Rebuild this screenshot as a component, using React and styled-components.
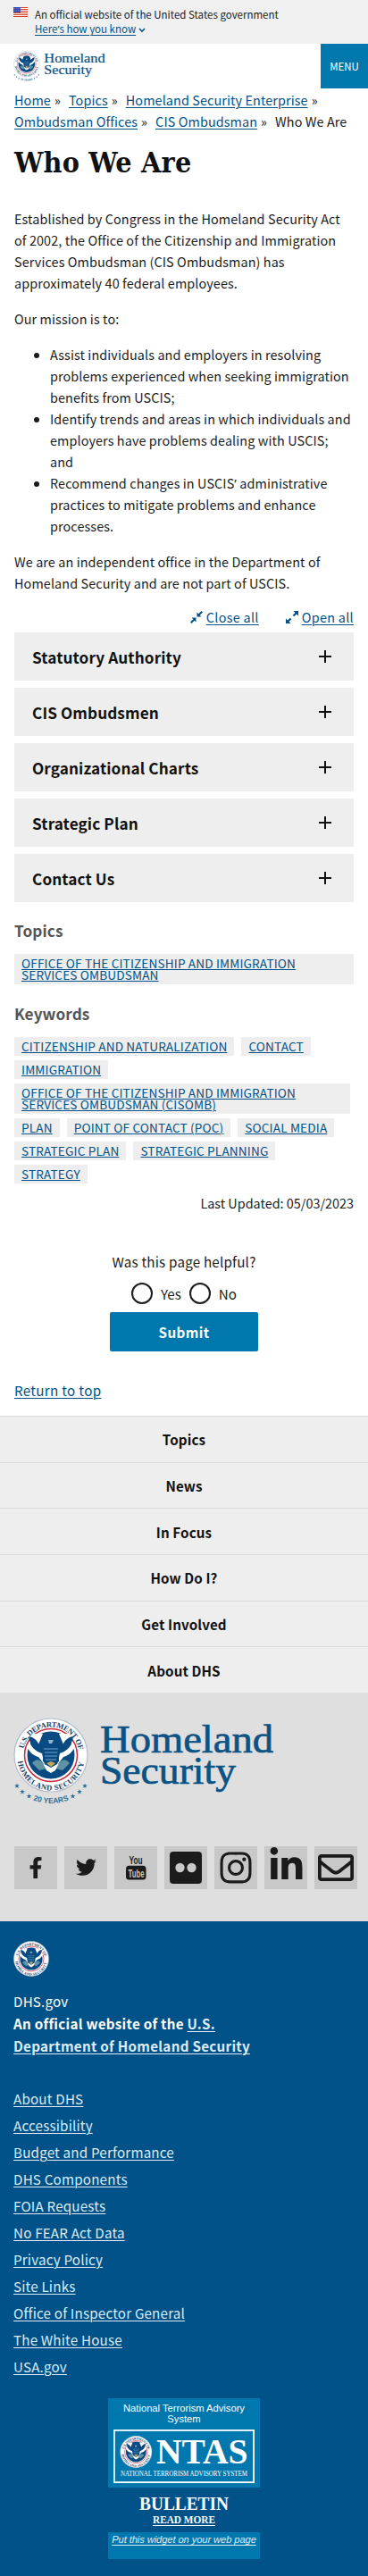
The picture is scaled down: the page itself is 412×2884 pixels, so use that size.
import React from "react";
import styled, { createGlobalStyle } from "styled-components";
import { FaFacebookF, FaTwitter, FaInstagram, FaLinkedinIn, FaRegEnvelope } from "react-icons/fa";

const sans = `"Noto Sans CJK SC", "Noto Sans", sans-serif`;

const Global = createGlobalStyle`
  *, *::before, *::after { box-sizing: border-box; }
  body { margin: 0; background: #fff; color: #1b1b1b; font-family: ${sans}; font-size: 14.4px; line-height: 24px; letter-spacing: 0.1px; }
  a { color: #005288; text-decoration: underline; text-underline-offset: 2px; text-decoration-thickness: 1px; }
  p, h1, h2, ul { margin: 0; padding: 0; }
  svg { overflow: visible; letter-spacing: 0; }
`;

const Apostrophe = styled.span`font-family: "Noto Sans", sans-serif; line-height: 0;`;

const Banner = styled.header`
  height: 49px; background: #f0f0f0; display: flex; gap: 8px; padding: 8px 15px 0;
  font-size: 11.5px; line-height: 16px; letter-spacing: 0;
`;
const Header = styled.div`
  height: 50px; display: flex; justify-content: space-between; align-items: flex-start;
`;
const LogoLink = styled.div`padding: 7px 0 0 15px; line-height: 0;`;
const MenuButton = styled.button`
  width: 53px; height: 50px; border: 0; padding: 0; background: #0078ae; color: #fff;
  font: 11.4px ${sans};
`;
const Crumbs = styled.nav`
  display: flex; flex-wrap: wrap; padding: 1px 16px 0; height: 49px; column-gap: 9px;
  white-space: nowrap;
  i { font-style: normal; margin-left: 4px; }
`;
const Title = styled.h1`
  font: bold 32px/40px "DejaVu Serif Condensed", "DejaVu Serif", serif; color: #111;
  letter-spacing: 0.2px; padding: 0 16px; margin-top: 14px; height: 71px;
`;
const Body = styled.main`padding: 0 16px;`;
const Para = styled.p`margin-bottom: 16px; white-space: nowrap;`;
const Bullets = styled.ul`padding-left: 40px; margin-bottom: 16px; white-space: nowrap;`;

const Tools = styled.div`
  display: flex; justify-content: flex-end; align-items: flex-start; gap: 30px; height: 27px;
  line-height: 19px; letter-spacing: 0.3px;
  span { display: flex; align-items: center; gap: 4px; }
`;
const Accordion = styled.button`
  display: flex; justify-content: space-between; align-items: center; width: 100%; height: 54px;
  margin-bottom: 8px; padding: 0 24px 0 20px; border: 0; background: #eee; color: #111;
  font: bold 17.2px ${sans}; letter-spacing: 0.1px;
`;
const TagHeading = styled.h2`
  font: bold 17.2px/24px ${sans}; color: #555; margin-top: ${(p) => p.$top}px; margin-bottom: 14px;
`;
const Tags = styled.div`display: flex; flex-wrap: wrap; gap: 5px 8px; margin-right: 4px;`;
const Tag = styled.a`
  display: block; background: #eee; padding: 4px 8px; font-size: 13.6px; line-height: 13px;
  letter-spacing: 0.15px; white-space: nowrap; width: ${(p) => (p.$w ? p.$w + "px" : "auto")};
  text-underline-offset: 1px;
`;
const Updated = styled.p`text-align: right; margin-top: 10px; letter-spacing: 0;`;

const Survey = styled.form`
  display: flex; flex-direction: column; align-items: center; margin-top: 41px;
  font-size: 15.2px; letter-spacing: 0.2px;
`;
const Options = styled.div`display: flex; gap: 9px; margin: 12px 0 9px;`;
const Option = styled.label`
  display: flex; align-items: center; gap: 9px; height: 24px; letter-spacing: 0;
  &::before { content: ""; width: 24px; height: 24px; border: 2px solid #1b1b1b; border-radius: 50%; }
`;
const Submit = styled.button`
  width: 166px; height: 44px; border: 0; border-radius: 2px; background: #0078ae; color: #fff;
  font: bold 15.2px ${sans}; letter-spacing: 0.4px;
`;
const ReturnTop = styled.div`margin-top: 31px; height: 41px; font-size: 15.2px; letter-spacing: 0.3px;`;

const NavRow = styled.a`
  display: flex; align-items: center; justify-content: center; height: 51.67px;
  background: #eee; border-top: 1px solid #dcdcdc; color: #111; text-decoration: none;
  font-weight: bold; font-size: 15.2px;
`;
const Secondary = styled.section`
  height: 256px; background: #dfdfdf; padding: 26px 12px 0 15px; line-height: 0;
`;
const Social = styled.div`display: flex; gap: 8px; margin: 40px 0 0 1px;`;
const SocialBox = styled.a`
  width: 48px; height: 48px; flex: none; background: #c8c8c8; color: #1b1b1b;
  display: flex; align-items: center; justify-content: center;
  padding-bottom: ${(p) => p.$lift || 0}px;
`;
const Identifier = styled.footer`
  height: 733px; background: #005288; color: #fff; padding: 22px 15px 0;
  font-size: 15.2px; line-height: 25px; letter-spacing: 0.18px;
  a { color: #dcecf8; }
  b { letter-spacing: 0.28px; }
  svg { display: block; }
`;
const Agency = styled.div`margin-top: 15px; line-height: 25px; white-space: nowrap;`;
const FooterLinks = styled.div`
  display: flex; flex-direction: column; align-items: flex-start; line-height: 30px; margin-top: 31px;
`;
const Widget = styled.div`
  width: 170px; margin: 21px auto 0; text-align: center; color: #fff;
  font: 11.2px/12px "Liberation Sans", Arial, sans-serif; letter-spacing: 0;
`;
const WidgetTop = styled.div`
  height: 100px; background: #0078ae; padding: 5px 6px 0;
  p { height: 30px; padding: 0 10px; }
`;
const WidgetLevel = styled.div`height: 50px;`;
const WidgetFoot = styled.div`
  height: 30px; background: #0078ae; padding-top: 2px; font-style: italic; white-space: nowrap; letter-spacing: -0.1px;
`;

function SealArt() {
  return (
    <g>
      <circle r="41" fill="#fff" stroke="#b4bccb" strokeWidth="1.2" />
      <circle r="29.5" fill="#fff" stroke="#c8293c" strokeWidth="1.5" />
      <circle r="26.5" fill="#0a4a82" />
      <path d="M-27-10 C-24-3-20 0-14 2 L-7 11 L-10-2 C-17-4-22-9-24-15Z M27-10 C24-3 20 0 14 2 L7 11 L10-2 C17-4 22-9 24-15Z" fill="#fff" />
      <path d="M-22-24 L-9-24 L-14-12 L-22-14Z M22-24 L9-24 L14-12 L22-14Z" fill="#fff" />
      <path d="M-25-21 C-19-20-16-17-14-13 L-11-9 L-9-13 C-12-19-7-24 0-24 C7-24 12-19 9-13 L11-9 L14-13 C16-17 19-20 25-21 C24-13 19-5 9-3 L9 7 L0 13 L-9 7 L-9-3 C-19-5-24-13-25-21Z" fill="#0a4a82" />
      <path d="M-3-17 L3-17 L1-13 L-2-13Z" fill="#8fb4cc" />
      <path d="M-8-7 H8 M-7-3 H7 M-7 1 H7 M-6 5 H6" stroke="#6fa3c8" strokeWidth="1" />
      <path d="M-21 9 C-17 4-13 4-9 9 L-5 15 L-13 17Z M21 9 C17 4 13 4 9 9 L5 15 L13 17Z" fill="#5f93a4" />
      <path d="M-9 9 L0 14 L9 9 L5 17 L0 20 L-5 17Z" fill="#fff" />
      <path d="M-5 9 L0 7 L5 9 L0 13Z" fill="#c5a95a" />
    </g>
  );
}

function SealText({ id }) {
  return (
    <g fill="#12406e" fontFamily="Liberation Serif, serif" fontSize="8.6" fontWeight="bold">
      <path id={id + "t"} d="M-31.5 0 A31.5 31.5 0 0 1 31.5 0" fill="none" />
      <path id={id + "b"} d="M-37.5 2 A37.5 37.5 0 0 0 37.5 2" fill="none" />
      <text textLength="86"><textPath href={`#${id}t`} startOffset="7">U.S. DEPARTMENT OF</textPath></text>
      <text textLength="106"><textPath href={`#${id}b`} startOffset="5">HOMELAND SECURITY</textPath></text>
    </g>
  );
}

function Seal({ size, id }) {
  return (
    <svg width={size} height={size} viewBox="-42 -42 84 84">
      <SealArt />
      <SealText id={id} />
    </svg>
  );
}

const stars = [[-38, 34.5], [-32, 41], [-24.5, 46], [24.5, 46], [32, 41], [38, 34.5]];
const starPath = "M0-2.8 L0.8-0.9 L2.7-0.9 L1.2 0.5 L1.7 2.4 L0 1.3 L-1.7 2.4 L-1.2 0.5 L-2.7-0.9 L-0.8-0.9Z";

function BrandLogo({ width, id }) {
  return (
    <svg width={width} height={(width * 106) / 300} viewBox="0 0 300 106">
      <g transform="translate(42 44)">
        <SealArt />
        <SealText id={id} />
        <path id={id + "y"} d="M-54 0 A54 54 0 0 0 54 0" fill="none" />
        <g fill="#2f6f97">
          <text fontFamily="Liberation Sans, sans-serif" fontWeight="bold" fontSize="8.5" textAnchor="middle">
            <textPath href={`#${id}y`} startOffset="50%">20 YEARS</textPath>
          </text>
          {stars.map(([x, y]) => <path key={x} d={starPath} transform={`translate(${x} ${y})`} />)}
        </g>
      </g>
      <g fill="#0b5285" stroke="#0b5285" strokeWidth="0.7" fontFamily="Liberation Serif, serif" fontSize="44">
        <text x="97" y="40.5" textLength="194" lengthAdjust="spacingAndGlyphs">Homeland</text>
        <text x="97" y="76" textLength="152" lengthAdjust="spacingAndGlyphs">Security</text>
      </g>
    </svg>
  );
}

const Flag = () => (
  <svg width="16" height="11" viewBox="0 0 16 11">
    <rect width="16" height="11" fill="#fff" />
    {[0, 2, 4, 6, 8, 10].map((y) => <rect key={y} y={y} width="16" height="1" fill="#db3e1f" />)}
    <rect width="8" height="6" fill="#1e33b1" />
    {[1, 3, 5].map((y) => [1, 3, 5, 7].map((x) => <rect key={x + "-" + y} x={x - 0.3} y={y - 0.3} width="0.8" height="0.8" fill="#fff" />))}
  </svg>
);

const Plus = () => (
  <svg width="16" height="16" viewBox="0 0 16 16"><path d="M8 1V15M1 8H15" stroke="#111" strokeWidth="2" /></svg>
);

const Collapse = () => (
  <svg width="14" height="14" viewBox="0 0 14 14" fill="#005288">
    <path d="M7.5 6.5V1.5L9.3 3.3L12.6 0L14 1.4L10.7 4.7L12.5 6.5Z M6.5 7.5V12.5L4.7 10.7L1.4 14L0 12.6L3.3 9.3L1.5 7.5Z" />
  </svg>
);
const Expand = () => (
  <svg width="14" height="14" viewBox="0 0 14 14" fill="#005288">
    <path d="M14 0V5.5L12 3.5L9.2 6.3L7.7 4.8L10.5 2L8.5 0Z M0 14V8.5L2 10.5L4.8 7.7L6.3 9.2L3.5 12L5.5 14Z" />
  </svg>
);

const YouTube = () => (
  <svg width="48" height="48" viewBox="0 0 48 48">
    <rect x="13" y="21.7" width="22.5" height="15.8" rx="3.5" fill="#1b1b1b" />
    <g fontFamily="Liberation Sans, sans-serif" fontWeight="bold">
      <text x="16.5" y="20" fontSize="12.5" textLength="15" lengthAdjust="spacingAndGlyphs" fill="#1b1b1b">You</text>
      <text x="15.5" y="34.6" fontSize="13" textLength="18" lengthAdjust="spacingAndGlyphs" fill="#c8c8c8">Tube</text>
    </g>
  </svg>
);

const Flickr = () => (
  <svg width="36" height="36" viewBox="0 0 36 36">
    <rect width="36" height="36" rx="4" fill="#1b1b1b" />
    <circle cx="11.5" cy="18" r="5.2" fill="#c8c8c8" /><circle cx="24.5" cy="18" r="5.2" fill="#c8c8c8" />
  </svg>
);

const NtasLogo = () => (
  <svg width="158" height="60" viewBox="0 0 158 60">
    <rect x="0.9" y="0.9" width="156.2" height="58.2" fill="none" stroke="#fff" strokeWidth="1.8" />
    <g transform="translate(25.3 25) scale(.43)"><SealArt /><SealText id="n" /></g>
    <g fill="#fff" fontFamily="Liberation Serif, serif">
      <text x="48" y="38.3" fontSize="40" fontWeight="bold" textLength="102.5" lengthAdjust="spacingAndGlyphs">NTAS</text>
      <text x="8" y="52" fontSize="7.6" textLength="142" lengthAdjust="spacingAndGlyphs">NATIONAL TERRORISM ADVISORY SYSTEM</text>
    </g>
  </svg>
);

const Bulletin = () => (
  <svg width="170" height="50" viewBox="0 0 170 50" fill="#fff" fontFamily="Liberation Serif, serif" fontWeight="bold">
    <text x="35" y="24.5" fontSize="21" textLength="100" lengthAdjust="spacingAndGlyphs">BULLETIN</text>
    <text x="50" y="39.7" fontSize="13" textLength="70" lengthAdjust="spacingAndGlyphs">READ MORE</text>
    <rect x="50" y="42" width="70" height="1" />
  </svg>
);

const sections = ["Statutory Authority", "CIS Ombudsmen", "Organizational Charts", "Strategic Plan", "Contact Us"];
const nav = ["Topics", "News", "In Focus", "How Do I?", "Get Involved", "About DHS"];
const footerLinks = ["About DHS", "Accessibility", "Budget and Performance", "DHS Components", "FOIA Requests",
  "No FEAR Act Data", "Privacy Policy", "Site Links", "Office of Inspector General", "The White House", "USA.gov"];
const crumbs = ["Home", "Topics", "Homeland Security Enterprise", "Ombudsman Offices", "CIS Ombudsman"];

export default function App() {
  return (
    <>
      <Global />
      <Banner>
        <Flag />
        <div>
          An official website of the United States government<br />
          <a>Here<Apostrophe>’</Apostrophe>s how you know</a>{" "}
          <svg width="8" height="6" viewBox="0 0 8 6"><path d="M1 1L4 4L7 1" fill="none" stroke="#005288" strokeWidth="1.6" /></svg>
        </div>
      </Banner>
      <Header>
        <LogoLink><BrandLogo width={106} id="h" /></LogoLink>
        <MenuButton>MENU</MenuButton>
      </Header>
      <Crumbs>
        {crumbs.map((c) => <span key={c}><a>{c}</a><i>»</i></span>)}
        <span>Who We Are</span>
      </Crumbs>
      <Title>Who We Are</Title>
      <Body>
        <Para>
          Established by Congress in the Homeland Security Act<br />of 2002, the Office of the Citizenship and Immigration<br />
          Services Ombudsman (CIS Ombudsman) has<br />approximately 40 federal employees.
        </Para>
        <Para>Our mission is to:</Para>
        <Bullets>
          <li>Assist individuals and employers in resolving<br />problems experienced when seeking immigration<br />benefits from USCIS;</li>
          <li>Identify trends and areas in which individuals and<br />employers have problems dealing with USCIS;<br />and</li>
          <li>Recommend changes in USCIS<Apostrophe>’</Apostrophe> administrative<br />practices to mitigate problems and enhance<br />processes.</li>
        </Bullets>
        <Para>We are an independent office in the Department of<br />Homeland Security and are not part of USCIS.</Para>
        <Tools>
          <span><Collapse /><a>Close all</a></span>
          <span><Expand /><a>Open all</a></span>
        </Tools>
        {sections.map((s) => <Accordion key={s}>{s}<Plus /></Accordion>)}
        <TagHeading $top={20}>Topics</TagHeading>
        <Tag>OFFICE OF THE CITIZENSHIP AND IMMIGRATION<br />SERVICES OMBUDSMAN</Tag>
        <TagHeading $top={21}>Keywords</TagHeading>
        <Tags>
          <Tag>CITIZENSHIP AND NATURALIZATION</Tag>
          <Tag>CONTACT</Tag>
          <Tag>IMMIGRATION</Tag>
          <Tag $w={376}>OFFICE OF THE CITIZENSHIP AND IMMIGRATION<br />SERVICES OMBUDSMAN (CISOMB)</Tag>
          <Tag>PLAN</Tag>
          <Tag>POINT OF CONTACT (POC)</Tag>
          <Tag>SOCIAL MEDIA</Tag>
          <Tag>STRATEGIC PLAN</Tag>
          <Tag>STRATEGIC PLANNING</Tag>
          <Tag>STRATEGY</Tag>
        </Tags>
        <Updated>Last Updated: 05/03/2023</Updated>
        <Survey>
          <div>Was this page helpful?</div>
          <Options><Option>Yes</Option><Option>No</Option></Options>
          <Submit type="button">Submit</Submit>
        </Survey>
        <ReturnTop><a>Return to top</a></ReturnTop>
      </Body>
      {nav.map((n) => <NavRow key={n}>{n}</NavRow>)}
      <Secondary>
        <BrandLogo width={300} id="f" />
        <Social>
          <SocialBox><FaFacebookF size={24} /></SocialBox>
          <SocialBox><FaTwitter size={23} /></SocialBox>
          <SocialBox><YouTube /></SocialBox>
          <SocialBox><Flickr /></SocialBox>
          <SocialBox><FaInstagram size={40} /></SocialBox>
          <SocialBox $lift={4}><FaLinkedinIn size={41} /></SocialBox>
          <SocialBox><FaRegEnvelope size={40} /></SocialBox>
        </Social>
      </Secondary>
      <Identifier>
        <Seal size={40} id="i" />
        <Agency>
          DHS.gov<br />
          <b>An official website of the <a>U.S.</a><br /><a>Department of Homeland Security</a></b>
        </Agency>
        <FooterLinks>{footerLinks.map((l) => <a key={l}>{l}</a>)}</FooterLinks>
        <Widget>
          <WidgetTop><p>National Terrorism Advisory System</p><NtasLogo /></WidgetTop>
          <WidgetLevel><Bulletin /></WidgetLevel>
          <WidgetFoot><a>Put this widget on your web page</a></WidgetFoot>
        </Widget>
      </Identifier>
    </>
  );
}
